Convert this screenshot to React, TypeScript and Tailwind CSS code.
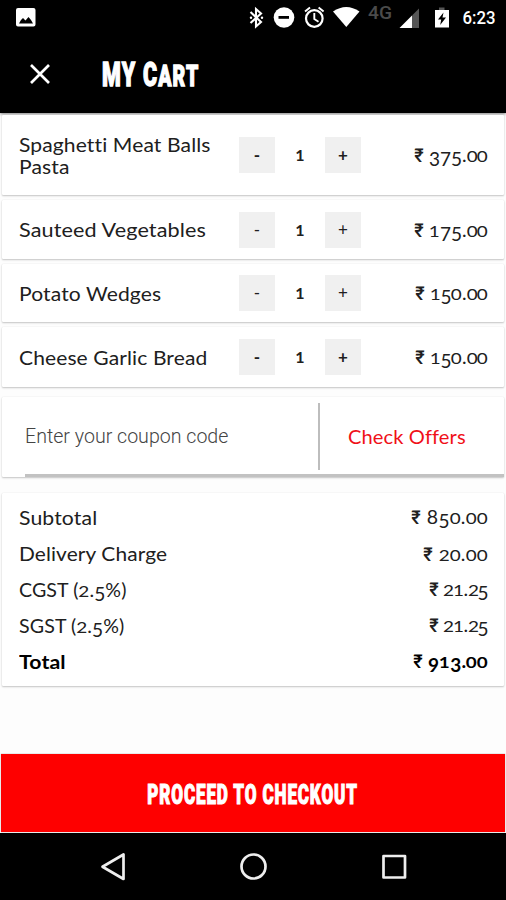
import { Fragment, type ReactNode } from "react";

const items = [
  { name: ["Spaghetti Meat Balls", "Pasta"], stretch: "scale-x-[1.08]", price: "375.00", box: "mt-[2px] h-[80px]", bold: true },
  { name: ["Sauteed Vegetables"], stretch: "scale-x-[1.108]", price: "175.00", box: "mt-[5px] h-[59px]", bold: false },
  { name: ["Potato Wedges"], stretch: "scale-x-[1.08]", price: "150.00", box: "mt-[5px] h-[58px]", bold: false },
  { name: ["Cheese Garlic Bread"], stretch: "scale-x-[1.078]", price: "150.00", box: "mt-[5px] h-[60px]", bold: true },
];

const totals = [
  { label: "Subtotal", stretch: "scale-x-[1.087]", value: "850.00", track: "tracking-[0.4px]" },
  { label: "Delivery Charge", stretch: "scale-x-[1.07]", value: "20.00", track: "tracking-[0.4px]" },
  { label: "CGST (2.5%)", stretch: "scale-x-[1.005]", value: "21.25", track: "tracking-[-0.6px]" },
  { label: "SGST (2.5%)", stretch: "scale-x-[1.005]", value: "21.25", track: "tracking-[-0.6px]" },
  { label: "Total", stretch: "scale-x-[1.09]", value: "913.00", track: "tracking-[0.2px]" },
];

// Old-style figures: 0, 1, 2 sit at x-height, 3, 4, 5, 7, 9 hang below the baseline.
function Figures({ children }: { children: string }) {
  return (
    <>
      {children.split("").map((c, i) => {
        if ("012".includes(c))
          return <span key={i} className="inline-block text-[16px] leading-none"><span className="inline-block scale-x-[1.18] px-[0.7px]">{c}</span></span>;
        if ("34579".includes(c))
          return <span key={i} className="inline-block align-[-4px] text-[19px] leading-none">{c}</span>;
        return <Fragment key={i}>{c}</Fragment>;
      })}
    </>
  );
}

function Price({ value, bold }: { value: string; bold?: boolean }) {
  return (
    <span className={"flex items-baseline whitespace-nowrap leading-[22px] " + (bold ? "font-bold" : "")}>
      <span className="mr-[5px] inline-block scale-x-[0.95] font-[Roboto] text-[19px] font-medium">₹</span>
      <span><Figures>{value}</Figures></span>
    </span>
  );
}

function Card({ className, children }: { className: string; children: ReactNode }) {
  return (
    <section className={"mx-[2px] shrink-0 rounded-[1px] bg-white shadow-[0_1px_2px_rgba(0,0,0,0.22),0_0_1px_rgba(0,0,0,0.12)] " + className}>
      {children}
    </section>
  );
}

function StatusBar() {
  return (
    <svg className="block h-[36px] w-full" viewBox="0 0 506 36" fill="white">
      <path fillRule="evenodd" d="M18 8h15.500q2 0 2 2v14.500q0 2-2 2H18q-2 0-2-2V10q0-2 2-2zM19 23.500h14l-2-3.500-2.500-3-3 3.500-2.500-2.500-2 2z" />
      <path d="M250.500 12l10.500 10-5 4.500V9l5 4.500-10.500 9.500" fill="none" stroke="white" strokeWidth="2.100" />
      <circle cx="251" cy="17.700" r="1.200" /><circle cx="262" cy="17.700" r="1.200" />
      <circle cx="284" cy="17.500" r="10.300" />
      <path d="M278.500 16h10.500v2.800h-10.500z" fill="black" />
      <g fill="none" stroke="white" strokeWidth="2.200">
        <circle cx="314.300" cy="18.500" r="8.300" />
        <path d="M314.300 13v6l4.200 2.700M305 11.500l5-4M323.600 11.500l-5-4" strokeWidth="1.900" />
      </g>
      <path d="M333 11.500q13.300-9 26.500 0L346.300 27z" />
      <text x="368" y="19" className="font-[Roboto] text-[19px] font-medium" fill="#4b4b4b" textLength="24" lengthAdjust="spacingAndGlyphs">4G</text>
      <path d="M412 15.500V28h-12.500z" />
      <path d="M412 15.500L419 8.500V28h-7z" fill="#555" />
      <path d="M439 7.500h5.500V10H439z" fill="#555" />
      <path d="M435 10h14v17.500h-14z" />
      <path d="M443.500 12.500l-5.500 7h3.200l-1 5.500 5.800-7.500h-3.500z" fill="black" />
      <text x="462.500" y="24" className="font-[Roboto] text-[17.500px] font-medium" textLength="33" lengthAdjust="spacingAndGlyphs">6:23</text>
    </svg>
  );
}

export default function App() {
  return (
    <main className="flex h-[900px] w-[506px] flex-col overflow-hidden bg-[#fdfdfd] font-[Lato,'Open_Sans',sans-serif] text-[19.500px] text-[#202020]">
      <header className="h-[113px] shrink-0 bg-black text-white shadow-[0_1px_3px_rgba(0,0,0,0.5)]">
        <StatusBar />
        <div className="flex h-[76px] items-center pl-[30px]">
          <svg className="h-[20px] w-[20px]" viewBox="0 0 20 20" stroke="white" strokeWidth="2.700"><path d="M1 1l18 18M19 1L1 19" /></svg>
          <h1 className="ml-[52px] origin-left scale-x-[0.66] whitespace-nowrap pt-[3px] font-[Roboto] text-[32.500px] leading-none font-black tracking-[1.800px] [-webkit-text-stroke:1.300px_white]">
            MY C<span className="text-[29.500px]">ART</span>
          </h1>
        </div>
      </header>

      {items.map((item) => (
        <Card key={item.name[0]} className={"flex items-center pr-[16px] pl-[17px] " + item.box}>
          <div className="w-[220px] whitespace-nowrap pt-[2px] leading-[22.500px] tracking-[0.1px]">
            {item.name.map((line) => <div key={line} className={"w-max origin-left " + item.stretch}>{line}</div>)}
          </div>
          <div className={"flex items-center text-center text-[17px] " + (item.bold ? "font-bold" : "font-normal")}>
            <button className="h-[36px] w-[36px] bg-[#f0f0f0] leading-[34px]">-</button>
            <span className="w-[50px] text-[16px] font-bold">1</span>
            <button className="h-[36px] w-[36px] bg-[#f0f0f0] leading-[34px]">+</button>
          </div>
          <div className="ml-auto pt-[2px]"><Price value={item.price} /></div>
        </Card>
      ))}

      <Card className="mt-[10px] flex h-[80px] pl-[23px]">
        <div className="flex h-full flex-1 items-center border-b-[3px] border-[#c2c2c2] pt-[2px]">
          <span className="w-[293px] whitespace-nowrap pt-px font-[Roboto] text-[19.600px] font-light text-[#444]">Enter your coupon code</span>
          <span className="h-[67px] w-[2px] bg-[#bdbdbd]" />
          <span className="ml-[28px] origin-left scale-x-[1.03] whitespace-nowrap tracking-[0.1px] text-[#f01018]">Check Offers</span>
        </div>
      </Card>

      <Card className="mt-[16px] h-[193px] pt-[7px] pr-[16px] pl-[17px]">
        {totals.map((row, i) => (
          <div key={row.label} className={"flex h-[36px] items-center justify-between " + (i === 4 ? "font-bold text-black" : "")}>
            <span className={"origin-left tracking-[0.1px] " + row.stretch}><Figures>{row.label}</Figures></span>
            <span className={row.track}><Price value={row.value} bold={i === 4} /></span>
          </div>
        ))}
      </Card>

      <button className="mx-[1px] mt-[68px] flex h-[78px] shrink-0 items-center justify-center bg-[#fe0000] pt-[3px] shadow-[0_0_1px_#888]">
        <span className="scale-x-[0.61] whitespace-nowrap font-[Roboto] text-[28px] font-black tracking-[1.400px] text-white [-webkit-text-stroke:1.100px_white]">PROCEED TO CHECKOUT</span>
      </button>
      <nav className="mt-[1px] flex-1 bg-black">
        <svg className="block h-full w-full" viewBox="0 0 506 67" fill="none" stroke="#eee" strokeWidth="2.700" strokeLinejoin="round">
          <path d="M123.500 21.500v24.500l-21-12.250z" />
          <circle cx="253.500" cy="33.500" r="12" />
          <rect x="383.500" y="23" width="21.500" height="21.500" />
        </svg>
      </nav>
    </main>
  );
}
